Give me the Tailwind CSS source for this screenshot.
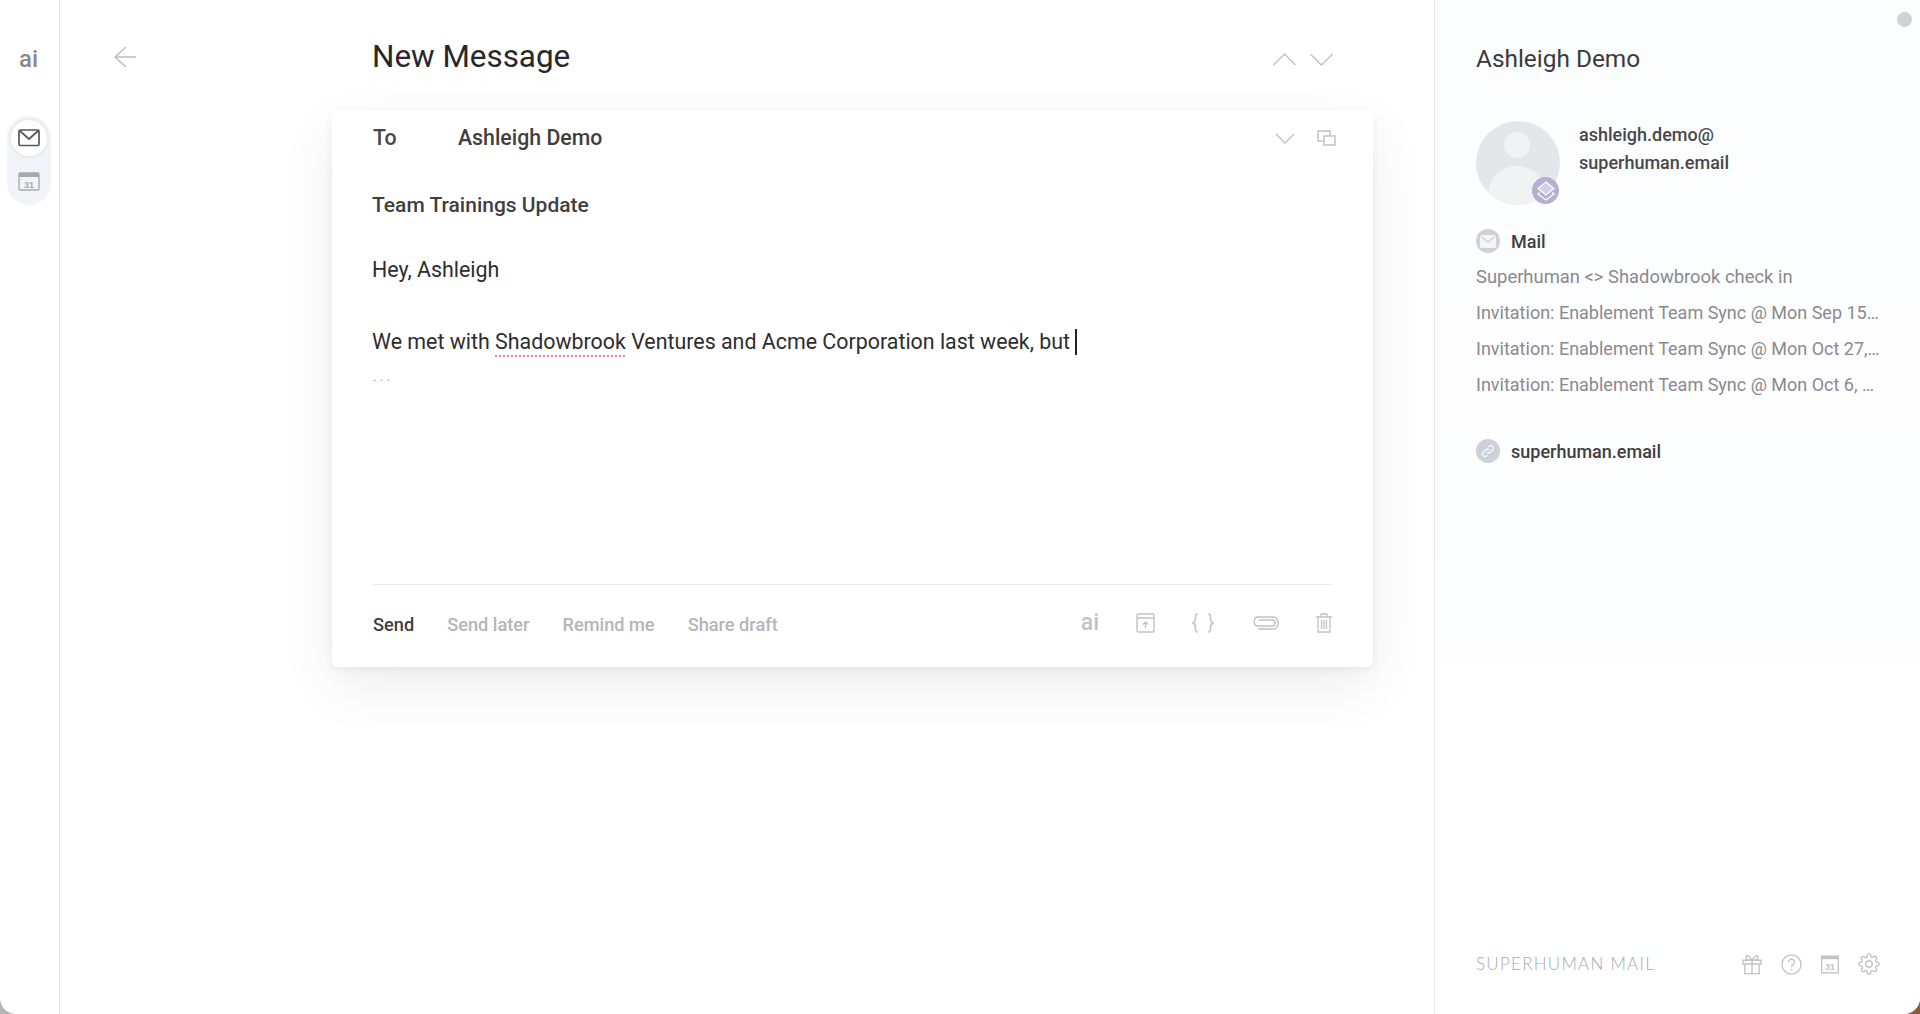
<!DOCTYPE html>
<html><head><meta charset="utf-8"><script src="https://cdn.jsdelivr.net/npm/@tailwindcss/browser@4"></script></head>
<body class="m-0 overflow-hidden bg-linear-to-r from-[#b5b5b5] to-[#8a5a3c]">
<div class="w-[1920px] h-[1014px] flex bg-white rounded-b-[16px] overflow-hidden font-['Roboto',sans-serif] text-[#2d2d2f]">
  <aside class="w-[60px] shrink-0 border-r border-[#e6e6e9] flex flex-col items-center">
    <div class="mt-[44px] mr-[2px] h-[30px] leading-[30px] text-[24px] font-medium text-[#8a8a8d]">ai</div>
    <div class="mt-[42px] w-[44px] h-[89px] rounded-full bg-[#f3f4fa] flex flex-col items-center pt-[4px] mr-[1px]">
      <div class="w-[36px] h-[36px] rounded-full bg-white shadow-[0_0_5px_rgba(0,0,0,0.10)] flex items-center justify-center">
        <svg width="22" height="18" viewBox="0 0 22 18" fill="none" stroke="#57575a" stroke-width="1.7"><rect x="1" y="1" width="20" height="15.5" rx="1.2"/><path d="M1.5 1.500 11 10l9.500-8.500"/></svg>
      </div>
      <svg class="mt-[16px]" width="22" height="20" viewBox="0 0 22 20"><rect x="1" y="1" width="20" height="17" rx="1" fill="none" stroke="#a9a9ac" stroke-width="1.3"/><rect x="1" y="1" width="20" height="4" fill="#a9a9ac"/><text x="11" y="15.500" text-anchor="middle" font-size="9" font-weight="700" fill="#a9a9ac" font-family="Liberation Sans">31</text></svg>
    </div>
  </aside>
  <main class="w-[1374px] shrink-0 flex flex-col relative">
    <header class="h-[110px] flex relative">
      <svg class="absolute left-[53px] top-[45px]" width="24" height="24" viewBox="0 0 24 24" fill="none" stroke="#bdbdc0" stroke-width="1.4"><path d="M23 12H2M13 2 2 12l11 10"/></svg>
      <h1 class="absolute left-[312px] top-[37px] text-[31.4px] leading-[40px] font-normal text-[#28282a]">New Message</h1>
      <div class="absolute left-[1213px] top-[53px] flex gap-[14px]">
        <svg width="23" height="13" viewBox="0 0 23 13" fill="none" stroke="#c2c2c5" stroke-width="1.4"><path d="M.500 12 11.500 1l11 11"/></svg>
        <svg width="23" height="13" viewBox="0 0 23 13" fill="none" stroke="#c2c2c5" stroke-width="1.4"><path d="M.500 1l11 11 11-11"/></svg>
      </div>
    </header>
    <section class="ml-[272px] w-[1041px] h-[557px] rounded-[6px] bg-white shadow-[0_3px_10px_rgba(0,0,0,0.06),0_20px_60px_rgba(0,0,0,0.07)] px-[41px] flex flex-col">
      <div class="h-[55px] pt-[1px] flex items-center">
        <span class="w-[85px] text-[21.3px] font-medium text-[#48484a]">To</span>
        <span class="text-[21.3px] font-medium text-[#3f3f41]">Ashleigh Demo</span>
        <div class="ml-auto flex items-center gap-[22px] mr-[-4px]">
          <svg width="20" height="11" viewBox="0 0 20 11" fill="none" stroke="#c2c2c5" stroke-width="1.4"><path d="M1 1l9 9 9-9"/></svg>
          <svg width="19" height="16" viewBox="0 0 19 16" fill="none" stroke="#c2c2c5" stroke-width="1.500"><path d="M7 11H1V1h12v5"/><rect x="7" y="6" width="11" height="9"/></svg>
        </div>
      </div>
      <div class="mt-[25px] -ml-[1px] text-[21px] leading-[30px] font-medium text-[#3f3f41]">Team Trainings Update</div>
      <div class="mt-[35px] -ml-[1px] text-[21.4px] leading-[30px] text-[#2d2d2f]">Hey, Ashleigh</div>
      <div class="mt-[42px] -ml-[1px] text-[21.4px] leading-[30px] text-[#2d2d2f] flex items-center">We met with&nbsp;<span class="underline decoration-dotted decoration-[#e08a8f] decoration-2 underline-offset-[6px]">Shadowbrook</span>&nbsp;Ventures and Acme Corporation last week, but&nbsp;<span class="w-[2px] h-[26px] bg-[#222]"></span></div>
      <div class="mt-[9px] text-[14px] leading-[20px] tracking-[3px] text-[#a9a9ac]">...</div>
      <div class="mt-auto border-t border-[#e8e8ea] h-[83px] pb-[2px] flex items-center">
        <span class="text-[18.2px] font-medium text-[#3f3f41]">Send</span>
        <span class="ml-[33px] text-[18.2px] font-medium text-[#b5b5b8]">Send later</span>
        <span class="ml-[33px] text-[18.2px] font-medium text-[#b5b5b8]">Remind me</span>
        <span class="ml-[33px] text-[18.2px] font-medium text-[#b5b5b8]">Share draft</span>
        <div class="ml-auto flex items-center gap-[37px] text-[#c2c2c5] pb-[5px]">
          <span class="text-[23px] font-medium leading-none">ai</span>
          <svg width="19" height="20" viewBox="0 0 19 20" fill="none" stroke="#c2c2c5" stroke-width="1.4"><rect x="1" y="1" width="17" height="18" rx="1"/><path d="M1 5h17M9.500 15V9M7 11.500 9.500 9l2.500 2.500"/></svg>
          <svg width="22" height="20" viewBox="0 0 22 20" fill="none" stroke="#c2c2c5" stroke-width="1.500"><path d="M6 1C3.500 1 3.500 2.500 3.500 5s0 4-2.500 5c2.500 1 2.500 2.500 2.500 5s0 4 2.500 4M16 1c2.500 0 2.500 1.500 2.500 4s0 4 2.500 5c-2.500 1-2.500 2.500-2.500 5s0 4-2.500 4"/></svg>
          <svg width="28" height="14" viewBox="0 0 28 14" fill="none" stroke="#c2c2c5" stroke-width="1.500"><path d="M8 4h14c3 0 3 6 0 6H7C2 10 2 1 7 1h15c7 0 7 12 0 12H7"/></svg>
          <svg width="16" height="20" viewBox="0 0 16 20" fill="none" stroke="#c2c2c5" stroke-width="1.300"><path d="M0 4h16M5 4V1h6v3M2 4v15h12V4M5.500 7v9M8 7v9M10.500 7v9"/></svg>
        </div>
      </div>
    </section>
  </main>
  <aside class="flex-1 border-l border-[#e6e6e9] bg-linear-to-b from-[#fcfdff] to-white pl-[41px] pr-[40px] flex flex-col relative">
    <div class="absolute right-[8px] top-[12px] w-[15px] h-[15px] rounded-full bg-[#d0d1d4]"></div>
    <div class="mt-[44px] text-[24.4px] leading-[30px] text-[#3a3a3c]">Ashleigh Demo</div>
    <div class="mt-[47px] flex">
      <div class="w-[84px] h-[84px] rounded-full bg-[#e4e6ea] relative shrink-0">
        <div class="absolute inset-0 rounded-full overflow-hidden">
          <div class="absolute left-[28px] top-[11px] w-[26px] h-[26px] rounded-full bg-[#f1f2f4]"></div>
          <div class="absolute left-[12px] top-[45px] w-[58px] h-[58px] rounded-full bg-[#f1f2f4]"></div>
        </div>
        <div class="absolute left-[56px] top-[56px] w-[27px] h-[27px] rounded-full bg-[#b3b1d2] flex items-center justify-center">
          <svg width="18" height="20" viewBox="0 0 18 20" fill="none" stroke="#fff" stroke-width="1.200"><path d="M9 1l8 6.500-8 6.500-8-6.500z" fill="#ffffff66"/><path d="M3 11.500 1 13l8 6 8-6-2-1.500"/></svg>
        </div>
      </div>
      <div class="ml-[19px] text-[18px] leading-[28px] font-medium text-[#48484a]">ashleigh.demo@<br>superhuman.email</div>
    </div>
    <div class="mt-[24px] flex items-center h-[24px]">
      <div class="w-[24px] h-[24px] rounded-full bg-[#ccd0d8] flex items-center justify-center"><svg width="16" height="13" viewBox="0 0 16 13"><rect width="16" height="13" rx="1.500" fill="#f4f5f7"/><path d="M1 1.500 8 7l7-5.500" fill="none" stroke="#ccd0d8" stroke-width="1.200"/></svg></div>
      <span class="ml-[11px] text-[18px] font-medium text-[#3f3f41]">Mail</span>
    </div>
    <div class="mt-[6px] text-[18px] text-[#8a8a8d] flex flex-col w-[404px]">
      <div class="h-[36px] leading-[36px] truncate text-[18.4px]">Superhuman &lt;&gt; Shadowbrook check in</div>
      <div class="h-[36px] leading-[36px] truncate">Invitation: Enablement Team Sync @ Mon Sep 15, 2025 10am</div>
      <div class="h-[36px] leading-[36px] truncate">Invitation: Enablement Team Sync @ Mon Oct 27, 2025 10am</div>
      <div class="h-[36px] leading-[36px] truncate">Invitation: Enablement Team Sync @ Mon Oct 6, 2025 10am</div>
    </div>
    <div class="mt-[36px] flex items-center h-[24px]">
      <div class="w-[24px] h-[24px] rounded-full bg-[#ccd0d8] flex items-center justify-center"><svg width="14" height="14" viewBox="0 0 14 14" fill="none" stroke="#f4f5f7" stroke-width="1.500"><path d="M6 8a2.500 2.500 0 0 0 3.500 0l2.500-2.500A2.500 2.500 0 0 0 8.500 2L7.500 3M8 6a2.500 2.500 0 0 0-3.500 0L2 8.500A2.500 2.500 0 0 0 5.500 12l1-1"/></svg></div>
      <span class="ml-[11px] text-[18px] font-medium text-[#3f3f41]">superhuman.email</span>
    </div>
    <div class="mt-auto mb-[38px] flex items-center h-[24px]">
      <span class="text-[17px] tracking-[1.25px] font-light text-[#a9a9ac] font-['Lato',sans-serif]">SUPERHUMAN MAIL</span>
      <div class="ml-auto flex items-center gap-[19px]">
        <svg width="20" height="21" viewBox="0 0 21 21" fill="none" stroke="#c2c2c5" stroke-width="1.400"><path d="M1 6h19v4H1zM3 10v10h15V10M10.500 6v14M10.500 6C8 1 4 0 4 3s4 3 6.500 3c2.500 0 6.500 0 6.500-3s-4-2-6.500 3"/></svg>
        <svg width="21" height="21" viewBox="0 0 22 22" fill="none" stroke="#c2c2c5" stroke-width="1.400"><circle cx="11" cy="11" r="10"/><path d="M8 8.500a3 3 0 1 1 4.500 2.600c-1 .6-1.500 1.100-1.500 2.400M11 15.500v1.500"/></svg>
        <svg width="18" height="19" viewBox="0 0 19 19"><rect x=".7" y=".7" width="17.600" height="17.600" fill="none" stroke="#c2c2c5" stroke-width="1.400"/><rect x=".7" y=".7" width="17.600" height="3.200" fill="#c2c2c5"/><text x="9.500" y="15" text-anchor="middle" font-size="9" font-weight="700" fill="#c2c2c5" font-family="Liberation Sans">31</text></svg>
        <svg width="22" height="22" viewBox="0 0 24 24" fill="none" stroke="#c2c2c5" stroke-width="1.500"><circle cx="12" cy="12" r="3.500"/><path d="M19.400 15a1.650 1.650 0 0 0 .33 1.820l.06.06a2 2 0 1 1-2.830 2.830l-.06-.06a1.650 1.650 0 0 0-2.800 1.170V21a2 2 0 1 1-4 0v-.09A1.650 1.650 0 0 0 7.300 19.800l-.06.06a2 2 0 1 1-2.830-2.830l.06-.06A1.650 1.650 0 0 0 3.300 14H3a2 2 0 1 1 0-4h.09A1.650 1.650 0 0 0 4.200 7.300l-.06-.06a2 2 0 1 1 2.830-2.830l.06.06A1.650 1.650 0 0 0 10 3.300V3a2 2 0 1 1 4 0v.09a1.650 1.650 0 0 0 2.800 1.170l.06-.06a2 2 0 1 1 2.830 2.830l-.06.06A1.650 1.650 0 0 0 20.700 10H21a2 2 0 1 1 0 4h-.09a1.650 1.650 0 0 0-1.510 1z"/></svg>
      </div>
    </div>
  </aside>
</div>
</body></html>
